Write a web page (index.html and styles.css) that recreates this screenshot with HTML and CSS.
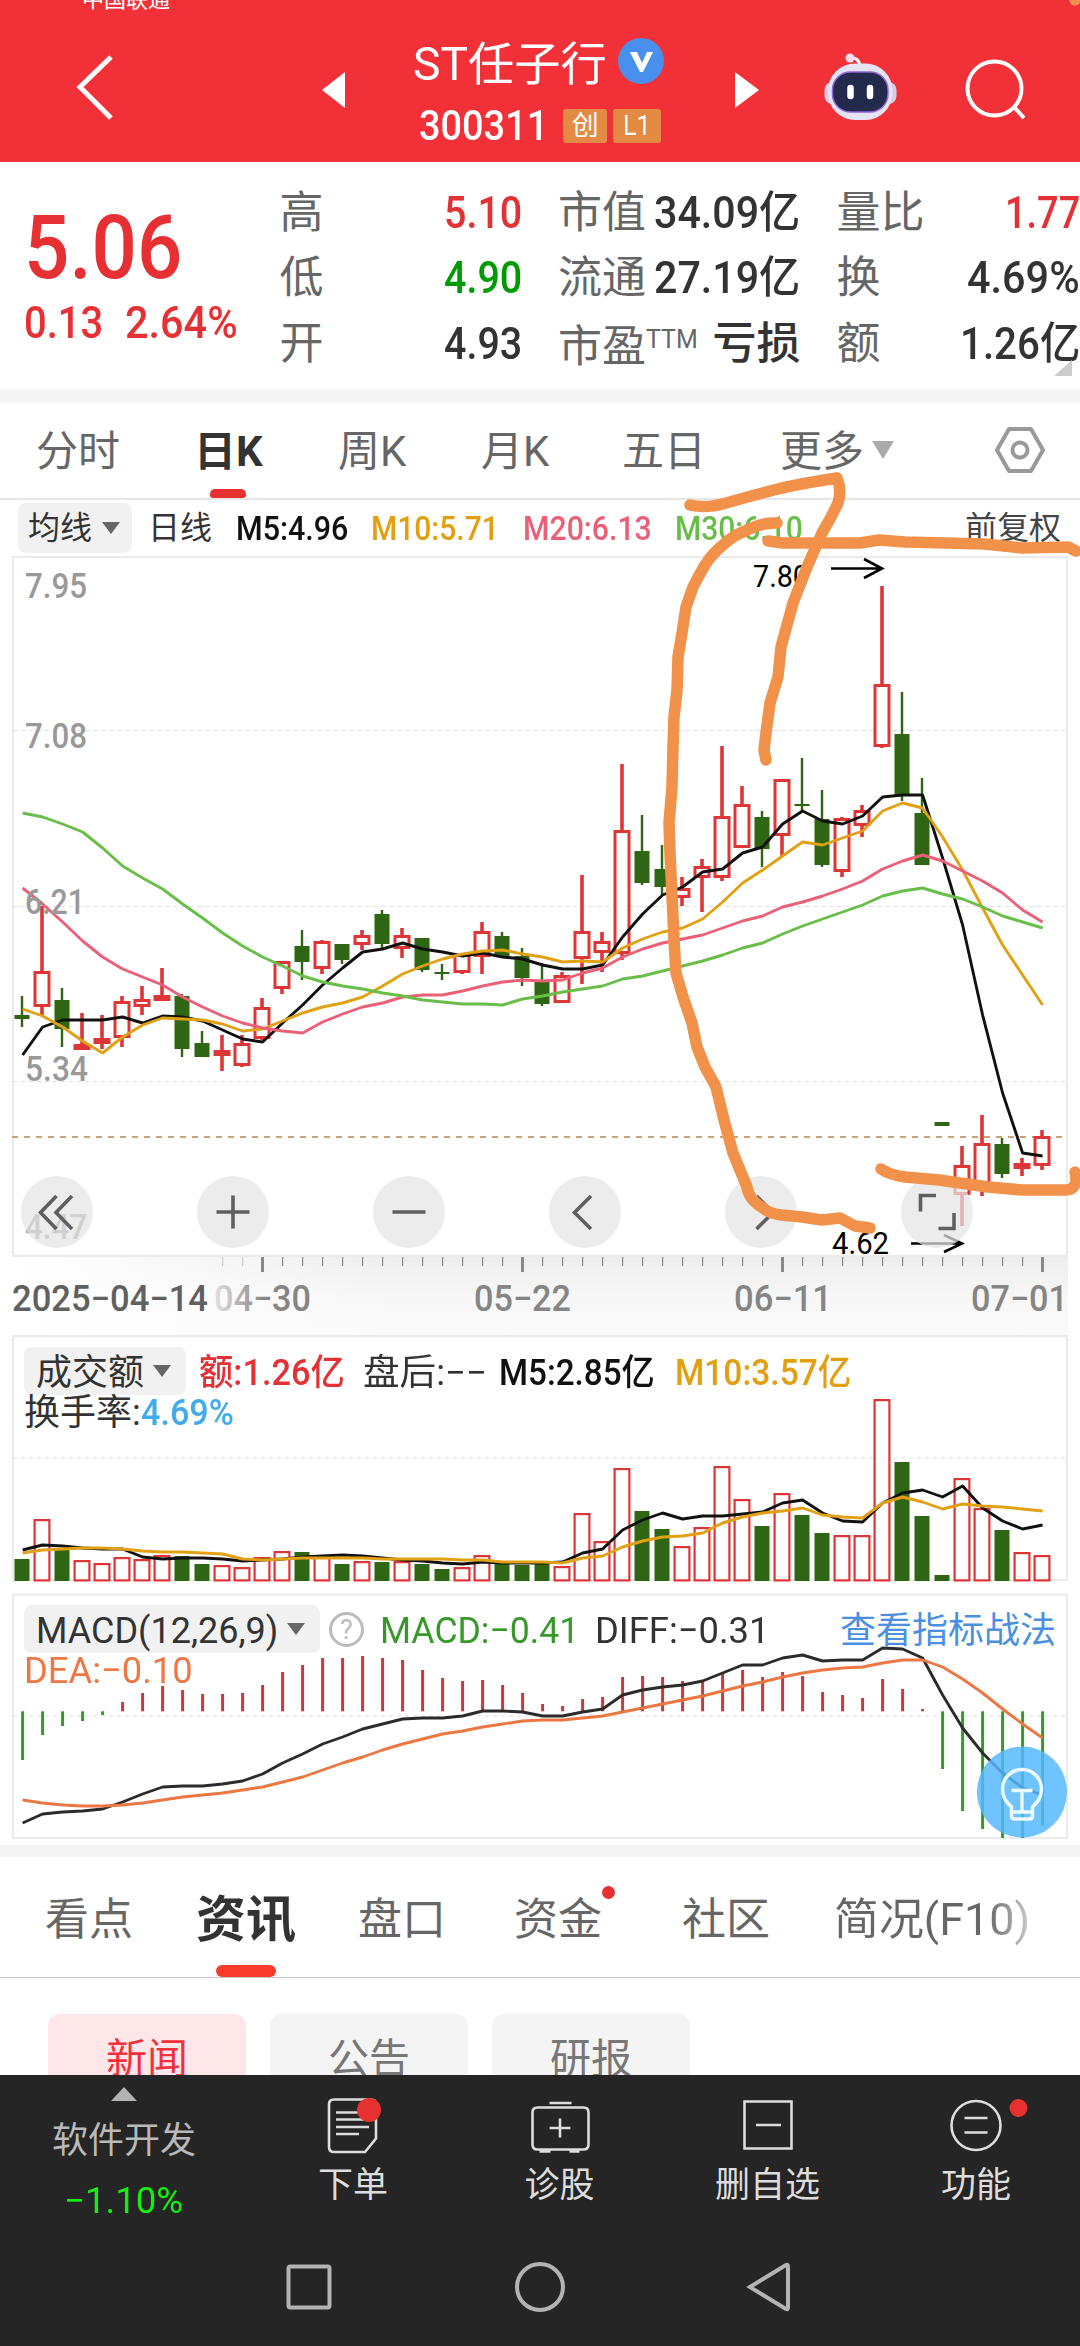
FILE: index.html
```html
<!DOCTYPE html>
<html lang="zh-CN">
<head>
<meta charset="utf-8">
<title>ST任子行 300311</title>
<link rel="stylesheet" href="styles.css">
</head>
<body>
<header class="top">
  <div class="carrier">中国联通</div>
  <div class="topbar">
    <svg class="back" width="40" height="70" viewBox="0 0 40 70"><path d="M36 5 5 35 36 66"/></svg>
    <svg class="prev" width="24" height="36" viewBox="0 0 24 36"><path d="M0 18 23 0v36z"/></svg>
    <div class="name">
      <div class="name-row"><span class="fit" data-w="194">ST任子行</span>
        <svg width="46" height="46" viewBox="0 0 46 46"><circle cx="23" cy="23" r="23" fill="#4890ec"/><path d="M12 14h7l5 11 5-11h6L25 34h-3z" fill="#fff"/></svg></div>
      <div class="code-row"><span class="fit code" data-w="129">300311</span><i class="tag">创</i><i class="tag tag-l"><span class="fit" data-w="28">L1</span></i></div>
    </div>
    <svg class="next" width="24" height="36" viewBox="0 0 24 36"><path d="M24 18 0 0v36z"/></svg>
    <svg class="robot" width="76" height="76" viewBox="823 50 76 76">
      <path d="M851 58q9-1 10 8" fill="none" stroke="#fff" stroke-width="3"/><circle cx="851" cy="58" r="4.5" fill="#f3dfee"/>
      <rect x="825.500" y="82" width="72" height="22" rx="8" fill="#d3cde8"/>
      <rect x="829" y="63.500" width="64.500" height="56.500" rx="27" fill="#e6e3f4"/>
      <rect x="833.500" y="72" width="55.500" height="40" rx="18" fill="#232a4c" stroke="#8e66dd" stroke-width="1.500"/>
      <path d="M851.500 88v8M871 88v8" stroke="#fff" stroke-width="6.500" stroke-linecap="round"/>
    </svg>
    <svg class="search" width="62" height="62" viewBox="964 58 62 62"><circle cx="994.500" cy="88.500" r="27"/><path d="m1014 107 10 11"/></svg>
  </div>
</header>

<section class="quote">
  <div class="price">
    <div class="big"><span class="fit" data-w="158">5.06</span></div>
    <div class="chg"><span class="fit" data-w="79">0.13</span><span class="fit" data-w="113">2.64%</span></div>
  </div>
  <dl class="q1">
    <div><dt>高</dt><dd class="up"><span class="fit" data-w="78">5.10</span></dd></div>
    <div><dt>低</dt><dd class="down"><span class="fit" data-w="78">4.90</span></dd></div>
    <div><dt>开</dt><dd><span class="fit" data-w="78">4.93</span></dd></div>
  </dl>
  <dl class="q2">
    <div><dt>市值</dt><dd><span class="fit" data-w="146">34.09亿</span></dd></div>
    <div><dt>流通</dt><dd><span class="fit" data-w="146">27.19亿</span></dd></div>
    <div><dt>市盈<small>TTM</small></dt><dd>亏损</dd></div>
  </dl>
  <dl class="q3">
    <div><dt>量比</dt><dd class="up"><span class="fit" data-w="75">1.77</span></dd></div>
    <div><dt>换</dt><dd><span class="fit" data-w="113">4.69%</span></dd></div>
    <div><dt>额</dt><dd><span class="fit" data-w="120">1.26亿</span></dd></div>
  </dl>
  <i class="corner"></i>
</section>

<nav class="periods">
  <span>分时</span><span class="on">日K</span><span>周K</span><span>月K</span><span>五日</span><span>更多</span>
  <i class="more"></i>
  <svg width="52" height="50" viewBox="994 425 52 50"><path d="M1009 429h22l12 21-12 21h-22l-12-21z"/><circle cx="1020" cy="450" r="7.500"/></svg>
</nav>

<section class="ma">
  <div class="pill"><span>均线</span><i></i></div>
  <span class="day">日线</span>
  <span class="fit m5" data-w="112">M5:4.96</span>
  <span class="fit m10" data-w="128">M10:5.71</span>
  <span class="fit m20" data-w="129">M20:6.13</span>
  <span class="fit m30" data-w="128">M30:6.10</span>
  <span class="adj">前复权</span>
</section>

<svg class="kline" width="1080" height="779" viewBox="0 556 1080 779">
  <defs>
    <linearGradient id="shade" x1="0" y1="0" x2="0" y2="1"><stop offset="0" stop-color="#ededed"/><stop offset=".5" stop-color="#f7f7f7"/><stop offset="1" stop-color="#fafafa"/></linearGradient>
    <linearGradient id="veil"><stop offset="0" stop-color="#fff"/><stop offset="1" stop-color="#fff" stop-opacity="0"/></linearGradient>
    <linearGradient id="fade" gradientUnits="userSpaceOnUse" x1="210" y1="0" x2="265" y2="0"><stop offset="0" stop-color="#e8e8e8"/><stop offset="1" stop-color="#858585"/></linearGradient>
  </defs>
  <rect x="13" y="1257" width="1055" height="78" fill="url(#shade)"/>
  <rect x="13" y="1257" width="400" height="78" fill="url(#veil)"/>
  <g class="frame"><path d="M13 557H1067V1256H13z"/></g>
  <g class="grid"><path d="M13 730.500H1066M13 906.500H1066M13 1081.500H1066"/></g>
  <path class="last" d="M12 1137H1066"/>
  <g id="kline"></g>
  <g class="scale">
    <text x="25" y="598" textLength="62">7.95</text><text x="25" y="748" textLength="62">7.08</text>
    <text x="25" y="914" textLength="60">6.21</text><text x="25" y="1081" textLength="63">5.34</text>
    <text x="25" y="1239" textLength="62">4.47</text>
  </g>
  <g class="callout">
    <text x="753" y="587" textLength="56">7.80</text><path d="M831 568.500H882M864 559l18 9.500-18 9.500"/>
    <text x="832" y="1254" textLength="57">4.62</text><path d="M911 1243.500H962M944 1235l18 8.500-18 8.500"/>
  </g>
  <g class="ctrl">
    <circle cx="57" cy="1212" r="36"/><circle cx="233" cy="1212" r="36"/><circle cx="409" cy="1212" r="36"/>
    <circle cx="585" cy="1212" r="36"/><circle cx="761" cy="1212" r="36"/><circle cx="937" cy="1212" r="36"/>
    <path d="M56.500 1196l-16 16.500 16 16.500M72 1196l-16 16.500 16 16.500M216.500 1212h33M233 1195.500v33M392.500 1212h33M591 1196l-16.500 16.500 16.500 16.500M756.500 1196l16.500 16.500-16.500 16.500M936 1195.500h-15.500v16M954 1213v15.500h-15.500"/>
  </g>
  <g id="ticks"></g>
  <g class="dates">
    <text class="first" x="12" y="1311" textLength="196">2025−04−14</text>
    <text x="214" y="1311" textLength="97" fill="url(#fade)">04−30</text>
    <text x="474" y="1311" textLength="97">05−22</text>
    <text x="734" y="1311" textLength="98">06−11</text>
    <text x="971" y="1311" textLength="97">07−01</text>
  </g>
</svg>

<section class="panel volume">
  <svg width="1080" height="250" viewBox="0 1335 1080 250">
    <g class="frame"><path d="M13 1336H1067V1580H13z"/></g>
    <g class="grid"><path d="M13 1458H1066"/></g>
    <g id="volume"></g>
  </svg>
  <div class="legend">
    <div class="pill"><span>成交额</span><i></i></div>
    <span class="fit up" data-w="146">额:1.26亿</span>
    <span class="fit after" data-w="124">盘后:−−</span>
    <span class="fit m5" data-w="156">M5:2.85亿</span>
    <span class="fit m10" data-w="176">M10:3.57亿</span>
  </div>
  <div class="legend line2"><span class="fit" data-w="117">换手率:</span><span class="fit rate" data-w="93">4.69%</span></div>
</section>

<section class="panel macd">
  <svg width="1080" height="252" viewBox="0 1593 1080 252">
    <g class="frame"><path d="M13 1594.500H1067V1838H13z"/></g>
    <g class="grid"><path d="M13 1716H1066"/></g>
    <g id="macd"></g>
  </svg>
  <div class="legend">
    <div class="pill"><span class="fit" data-w="242">MACD(12,26,9)</span><i></i></div>
    <b class="help">?</b>
    <span class="fit g" data-w="199">MACD:−0.41</span>
    <span class="fit diff" data-w="175">DIFF:−0.31</span>
    <span class="link">查看指标战法</span>
  </div>
  <div class="legend line2"><span class="fit dea" data-w="169">DEA:−0.10</span></div>
  <svg class="bulb" width="90" height="94" viewBox="976.500 1745 90 94"><ellipse cx="1021.500" cy="1792" rx="45" ry="45.500"/><path d="M1011 1816v-9c-5-5-9-9-9-18a19.500 19.500 0 0 1 39 0c0 9-4 13-9 18v9q0 3-3 3h-15q-3 0-3-3zM1011 1812h21M1011 1790.500h21M1021.500 1791v20"/></svg>
</section>

<nav class="info">
  <span>看点</span><span class="on">资讯</span><span>盘口</span><span class="dot">资金</span><span>社区</span><span class="f10"><span class="fit" data-w="196">简况(F10)</span></span>
</nav>

<section class="chips"><span class="on">新闻</span><span>公告</span><span>研报</span></section>

<footer>
  <div class="actions">
    <div class="index"><i></i><span>软件开发</span><b class="fit" data-w="119">−1.10%</b></div>
    <div class="a1"><svg width="64" height="64" viewBox="321 2093 64 64"><path d="M334 2099.500h37q5 0 5 5v34l-11 13.500h-31q-5 0-5-5v-42.500q0-5 5-5zM336 2112.500h25M336 2119.500h30M336 2127h33M336 2134h23"/><circle class="red" cx="369" cy="2110" r="12"/></svg><span>下单</span></div>
    <div class="a2"><svg width="64" height="64" viewBox="527.500 2093 64 64"><path d="M537 2107.500h46q5 0 5 5v32q0 5-5 5h-46q-5 0-5-5v-32q0-5 5-5zM549 2103h22M559.500 2118.500v19M549 2128h21M539 2151.500h11M569 2151.500h10"/></svg><span>诊股</span></div>
    <div class="a3"><svg width="64" height="64" viewBox="735 2093 64 64"><path d="M743.500 2101.500h47v47h-47zM755 2125h25"/></svg><span>删自选</span></div>
    <div class="a4"><svg width="80" height="64" viewBox="935.500 2093 80 64" overflow="visible"><circle cx="975.500" cy="2125.500" r="24.500"/><path d="M964 2118h23M964 2132.500h23"/><circle class="red" cx="1018" cy="2108" r="9"/></svg><span>功能</span></div>
  </div>
  <svg class="sys" width="1080" height="60" viewBox="0 2257 1080 60"><rect x="288.500" y="2266.500" width="41" height="41" rx="2"/><circle cx="540" cy="2287" r="23"/><path d="M750 2287l36-22q2-1 2 2v40q0 3-2 2z"/></svg>
</footer>

<svg class="marks" width="1080" height="1300" viewBox="0 0 1080 1300">
  <path d="M690 505Q706 509 726 503 758 494 778 489T837 478Q842 490 838 503 831 518 822 533L807 567 793 603 781 647 778 677 770 703 766 733 764 750 766 760"/>
  <path d="M777 523Q762 522 743 532 734 535 723 545 712 554 705 565 698 577 693 587L686 607 682 633 678 657 677 690 674 717 673 747 672 787 669 823 670 853 673 917 674 940 676 973 683 997 692 1023 697 1047 705 1067 716 1087 724 1120 733 1153 747 1187Q749 1200 763 1208 768 1213 781 1215L802 1217 822 1220 840 1218 855 1226 870 1228"/>
  <path d="M768 541 783 543H860L879 540 905 542 946 543 984 544 1022 548 1068 547 1076 551"/>
  <path d="M881 1169Q890 1175 905 1177L939 1180 988 1187 1022 1190 1065 1190Q1079 1190 1075 1172"/>
  <path d="M1075-6v6"/>
</svg>
<script src="app.js"></script>
</body>
</html>
```
FILE: styles.css
```css
* { box-sizing: border-box; }
body { margin: 0; width: 1080px; height: 2346px; overflow: hidden; position: relative; background: #fff; color: #333; font-family: Roboto, "Noto Sans CJK SC", sans-serif; }
i { font-style: normal; }
dl, dd { margin: 0; }
.fit { display: inline-block; white-space: nowrap; transform-origin: 0 50%; flex: none; }
svg { flex: none; }
.up { color: #e23236; }
.down { color: #009b00; }
.m5 { color: #111; }
.m10 { color: #e29f12; }
.m20 { color: #eb6077; }
.m30 { color: #68be48; }

.top { height: 162px; background: #f23037; color: #fff; overflow: hidden; }
.carrier { height: 20px; padding-left: 82px; margin-bottom: 0; font-size: 22px; line-height: 22px; margin-top: -11px; }
.topbar { display: flex; align-items: flex-start; height: 153px; }
.back { fill: none; stroke: #fff; stroke-width: 5; }
.topbar > .back { margin-top: 43px; margin-left: 75px; }
.topbar > .prev { margin-top: 63px; margin-left: 207px; }
.topbar > .next { margin-top: 63px; margin-left: 70px; }
.prev, .next { fill: #fff; }
.name { width: 252px; margin-left: 67px; padding-top: 24px; }
.name-row { display: flex; align-items: center; justify-content: space-between; font-size: 46px; line-height: 56px; height: 56px; padding-right: 1px; }
.name-row .fit { padding-top: 5px; }
.code-row { display: flex; align-items: center; margin-top: 17px; padding-left: 6px; height: 40px; font-size: 42px; font-weight: 500; line-height: 42px; }
.tag { height: 34px; width: 44px; margin-left: 15px; background: #e38b45; border-radius: 3px; font: 400 27px/34px Roboto, "Noto Sans CJK SC", sans-serif; text-align: center; }
.tag-l { width: 48px; margin-left: 6px; text-align: left; padding-left: 10px; }
.topbar > .robot { margin-top: 41px; margin-left: 63px; }
.topbar > .search { margin-top: 49px; margin-left: 66px; fill: none; stroke: #fff; stroke-width: 4; }

.quote { height: 240px; border-bottom: 12px solid #f4f4f4; position: relative; display: flex; }
.price { width: 281px; padding-left: 24px; color: #e73033; }
.big { font-size: 89px; font-weight: 500; line-height: 90px; margin-top: 41px; }
.chg { display: flex; gap: 22px; font-size: 44px; line-height: 50px; margin-top: 5px; font-weight: 500; }
.quote dl { padding-top: 18px; }
.quote dl div { display: flex; justify-content: space-between; align-items: center; height: 65.5px; }
.quote dt { font-size: 44px; line-height: 60px; color: #666; }
.quote dt small { font-size: 25px; vertical-align: 14px; font-weight: 400; }
.quote dd { font-size: 44px; line-height: 60px; font-weight: 500; white-space: nowrap; }
.q1 { width: 242px; }
.q1 dt { margin-left: -1px; }
.q2 { width: 243px; margin-left: 36px; }
.q3 { width: 244px; margin-left: 36px; }
.corner { position: absolute; right: 8px; top: 198px; border-left: 18px solid transparent; border-bottom: 16px solid #ccc; }

.periods { height: 98px; border-bottom: 2px solid #e6e6e6; position: relative; display: grid; grid-template-columns: 158px 144px 143px 141px 158px 92px 124px 60px; padding-left: 36px; font-size: 42px; line-height: 100px; color: #666; }
.periods span { white-space: nowrap; height: 96px; }
.periods .on { color: #333; font-weight: 700; position: relative; }
.periods .on::after { content: ""; position: absolute; left: 16px; bottom: 0; width: 36px; height: 9px; border-radius: 5px 5px 3px 3px; background: #e73030; }
.more { width: 0; height: 0; margin-top: 39px; border: 11px solid transparent; border-top: 18px solid #aaa; border-bottom: 0; }
.periods svg { margin-top: 23px; margin-left: -2px; fill: none; stroke: #999; stroke-width: 4; stroke-linejoin: round; }

.ma { height: 56px; display: flex; align-items: center; padding: 0 19px 0 18px; font-size: 34px; font-weight: 500; line-height: 51px; }
.pill { background: #f1f1f1; border-radius: 8px; display: flex; align-items: center; }
.pill i { border: 9px solid transparent; border-top: 12px solid #666; border-bottom: 0; }
.ma .pill { width: 114px; height: 50px; padding-left: 10px; gap: 10px; font-size: 32px; font-weight: 400; }
.day { font-size: 32px; font-weight: 400; margin-left: 16px; width: 88px; }
.ma .m10 { margin-left: 23px; }
.ma .m20 { margin-left: 24px; }
.ma .m30 { margin-left: 23px; }
.adj { margin-left: auto; font-size: 32px; font-weight: 400; color: #444; }

.kline { display: block; }
.frame { fill: none; stroke: #ebebeb; stroke-width: 2; }
.grid { fill: none; stroke: #dedede; stroke-width: 1.2; stroke-dasharray: 4 4; }
.last { stroke: #c8a373; stroke-width: 2; stroke-dasharray: 6 6; }
.line { fill: none; stroke-width: 2.9; stroke-linejoin: round; }
.scale { font-size: 35px; font-weight: 500; fill: #999; }
.callout { font-size: 31px; fill: #000; }
.callout path { fill: none; stroke: #000; stroke-width: 2.6; }
.ctrl { fill: rgba(228, 228, 228, .72); }
.ctrl path { fill: none; stroke: #5f5f5f; stroke-width: 3.6; }
.dates { font-size: 36px; fill: #858585; font-weight: 500; }
.dates .first { fill: #606060; }

.panel { position: relative; }
.panel > svg:first-child { position: absolute; left: 0; top: 0; }
.volume { height: 258px; padding-top: 12px; }
.macd { height: 252px; padding-top: 12px; }
.legend { position: relative; display: flex; align-items: center; height: 48px; margin-left: 24px; font-size: 36px; line-height: 48px; }
.legend span { padding-top: 3px; }
.legend .pill { width: 162px; height: 48px; padding-left: 12px; gap: 9px; margin-right: 13px; font-size: 36px; }
.volume .legend .fit { font-weight: 500; }
.volume .legend .after { font-weight: 400; margin-left: 18px; color: #333; }
.volume .m5 { margin-left: 12px; }
.volume .m10 { margin-left: 20px; }
.volume .line2, .macd .line2 { height: 36px; line-height: 36px; margin-top: -2px; }
.volume .line2 .fit:first-child { font-weight: 400; }
.rate { color: #42acea; }
.macd .legend .pill { width: 296px; }
.macd .legend { font-size: 37px; }
.help { width: 35px; height: 35px; border: 3px solid #bbb; border-radius: 50%; margin-left: -4px; margin-right: 16px; font-size: 27px; line-height: 30px; text-align: center; font-weight: 400; color: #bbb; }
.g { color: #38992a; }
.diff { margin-left: 16px; }
.link { font-size: 36px; color: #4a90e2; margin-left: auto; margin-right: 24px; }
.dea { color: #ee7744; }
.bulb { position: absolute; left: 976.5px; top: 152px; }
.bulb ellipse { fill: rgba(84, 184, 255, .84); }
.bulb path { fill: none; stroke: #eafaff; stroke-width: 3.5; stroke-linejoin: round; }

.info { height: 133px; border-top: 12px solid #f4f4f4; border-bottom: 1px solid #c8c8c8; display: grid; grid-template-columns: 151px 162px 156px 168px 152px 200px; padding-left: 45px; font-size: 44px; line-height: 126px; color: #666; }
.info span { white-space: nowrap; height: 120px; }
.info .on { font-size: 50px; font-weight: 700; color: #333; position: relative; }
.info .on::after { content: ""; position: absolute; left: 20px; bottom: 0; width: 60px; height: 12px; border-radius: 7px; background: #f93b2e; }
.dot { position: relative; }
.dot::after { content: ""; position: absolute; left: 88px; top: 29px; width: 13px; height: 13px; border-radius: 50%; background: #e73030; }
.f10 .fit { background: linear-gradient(90deg, #666 78%, #ccc); -webkit-background-clip: text; background-clip: text; color: transparent; }

.chips { height: 97px; padding: 36px 48px 0; display: flex; gap: 24px; overflow: hidden; }
.chips span { width: 198px; height: 90px; border-radius: 12px; background: #f4f4f4; color: #777; font-size: 41px; line-height: 90px; text-align: center; }
.chips .on { background: #ffe7e9; color: #f0303d; }

footer { height: 271px; background: #252525; color: #ddd; }
.actions { height: 182px; display: flex; }
.actions > div { display: flex; flex-direction: column; align-items: center; font-size: 35px; line-height: 40px; padding-top: 18px; }
.actions > div > span { margin-top: 9px; }
.actions svg { fill: none; stroke: #ddd; stroke-width: 2.6; }
.actions .red { fill: #e73030; stroke: none; }
.actions .index { width: 248px; padding-top: 12px; color: #b9b9b9; }
.actions .index i { border: 13px solid transparent; border-bottom: 14px solid #b3b3b3; border-top: 0; }
.actions .index span { font-size: 36px; margin-top: 20px; }
.index b { margin-top: 20px; font-size: 36px; font-weight: 400; color: #12f012; }
.a1 { width: 210px; }
.a2 { width: 203px; }
.a3 { width: 213px; }
.a4 { width: 204px; }
.sys { display: block; fill: none; stroke: #b3b3b3; stroke-width: 4; }
.marks { position: absolute; left: 0; top: 0; fill: none; stroke: #f29149; stroke-width: 11.5; stroke-linecap: round; stroke-linejoin: round; }
```
FILE: app.js
```js
document.querySelectorAll('.fit').forEach(function (el) {
  var w = +el.dataset.w, n = el.offsetWidth;
  el.style.transform = 'scaleX(' + w / n + ')';
  el.style.marginRight = (w - n) + 'px';
});
document.querySelectorAll('text[textLength]').forEach(function (t) {
  t.setAttribute('lengthAdjust', 'spacingAndGlyphs');
});

var RED = '#dd3639', GREEN = '#2f6614';
function X(i) { return 22 + 20 * i; }
function rect(x, y, w, h, fill) { return '<rect x="' + x + '" y="' + y + '" width="' + w + '" height="' + h + '" fill="' + fill + '"/>'; }
function hollow(x, top, bottom, s) {
  return '<rect x="' + (x - 8.5 + s / 2) + '" y="' + (top + s / 2) + '" width="' + (17 - s) + '" height="' + Math.max(1, bottom - top - s) + '" fill="#fff" stroke="' + RED + '" stroke-width="' + s + '"/>';
}
function line(ys, color) {
  return '<polyline class="line" stroke="' + color + '" points="' + ys.map(function (y, i) { return (X(i) + 0.6) + ',' + y; }).join(' ') + '"/>';
}

// colour, high, body top, body bottom, low
var candles = [
 'g',996,1015,1019,1027,'r',906,971,1007,1015,'g',988,1000,1029,1047,'r',1013,1044,1050,1050,'r',1015,1038,1044,1049,
 'r',996,1001,1038,1047,'r',986,999,1007,1015,'r',968,995,1001,1001,'g',994,996,1049,1057,'g',1031,1043,1057,1057,
 'r',1035,1050,1056,1071,'r',1035,1043,1066,1067,'r',998,1007,1039,1040,'r',961,961,989,994,'g',930,946,962,980,
 'r',940,941,969,974,'g',944,944,960,964,'r',930,935,945,950,'g',910,914,944,948,'r',928,935,949,958,
 'g',938,938,970,972,'g',964,972,974,980,'r',953,954,973,974,'r',922,931,957,974,'g',932,936,957,957,
 'g',948,956,978,986,'g',963,982,1004,1006,'r',972,975,1003,1003,'r',875,931,959,984,'r',932,941,953,972,
 'r',764,830,954,960,'g',815,851,883,885,'g',845,869,887,895,'r',877,888,898,906,'r',859,866,878,912,
 'r',746,816,878,881,'r',786,804,848,848,'g',811,817,849,867,'r',779,779,836,857,'g',758,804,806,811,
 'g',790,819,865,867,'r',817,818,872,877,'r',805,810,826,837,'r',586,684,747,748,'g',692,734,795,801,
 'g',778,813,865,865,'g',1122,1122,1126,1126,'r',1146,1165,1195,1226,'r',1115,1143,1185,1196,'g',1138,1144,1174,1178,
 'r',1158,1163,1169,1176,'r',1130,1136,1166,1170];
var ma5 = [1055,1027,1020,1020,1020,1017,1023,1016,1017,1021,1030,1039,1042,1023,1005,985,968,952,949,943,949,952,956,953,957,959,965,969,969,965,937,914,895,887,872,869,853,847,824,811,821,824,816,797,795,795,858,925,1015,1093,1153,1156];
var ma10 = [1009,1016,1027,1041,1053,1037,1025,1018,1019,1020,1024,1031,1029,1021,1013,1007,1003,997,986,974,966,959,954,951,950,954,957,962,961,962,948,939,932,928,919,902,883,870,856,842,845,838,831,811,803,808,837,870,908,945,975,1005];
var ma20 = [888,904,922,941,957,969,977,985,997,1007,1016,1023,1028,1031,1033,1022,1014,1007,1003,997,995,995,991,986,982,980,981,980,973,968,957,949,943,939,935,928,921,916,907,902,896,889,881,869,861,855,861,871,881,893,910,922];
var ma30 = [813,817,824,832,848,866,878,889,904,918,933,946,957,966,976,982,986,989,993,996,1000,1002,1004,1004,1005,999,996,992,989,986,979,976,971,966,961,955,948,943,934,926,919,912,905,896,891,888,894,899,907,916,922,928];

var out = '', i;
for (i = 0; i < 52; i++) {
  var c = candles.slice(i * 5, i * 5 + 5), x = X(i), red = c[0] === 'r';
  out += rect(x - (red ? 1.8 : 1.2), c[1], red ? 3.6 : 2.4, c[4] - c[1], red ? RED : GREEN);
  out += red ? hollow(x, c[2], c[3], 3) : rect(x - 7.5, c[2], 15, c[3] - c[2], GREEN);
}
out += line(ma5, '#111') + line(ma10, '#e2a014') + line(ma20, '#eb6077') + line(ma30, '#68be48');
document.getElementById('kline').innerHTML = out;

out = '';
for (i = 10; i < 52; i++) {
  var major = i === 12 || i === 25 || i === 38 || i === 51;
  out += rect(X(i) + (major ? -1 : 0), 1257, major ? 3 : 1.2, major ? 15 : 9, i < 12 ? '#ccc' : '#888');
}
document.getElementById('ticks').innerHTML = out;

var vol = [1559,1519,1548,1560,1563,1557,1559,1555,1556,1564,1565,1567,1557,1551,1552,1555,1564,1561,1562,1561,1564,1569,1567,1555,1564,1565,1563,1566,1513,1541,1468,1511,1529,1546,1527,1466,1499,1526,1493,1515,1533,1535,1535,1399,1462,1516,1575,1478,1508,1530,1552,1555];
var v5 = [1550,1545,1546,1548,1549,1549,1557,1559,1558,1558,1559,1561,1560,1559,1557,1556,1555,1556,1558,1560,1561,1563,1564,1562,1563,1563,1563,1562,1553,1549,1530,1520,1513,1519,1516,1516,1514,1512,1503,1500,1513,1521,1522,1503,1493,1490,1497,1486,1508,1521,1529,1525];
var v10 = [1553,1550,1549,1548,1548,1549,1551,1552,1552,1553,1554,1559,1560,1559,1558,1558,1558,1558,1559,1559,1559,1559,1560,1560,1562,1562,1562,1563,1558,1556,1547,1541,1537,1536,1533,1523,1517,1513,1511,1508,1515,1517,1518,1503,1497,1502,1509,1504,1506,1507,1509,1511];
out = '';
for (i = 0; i < 52; i++) {
  out += candles[i * 5] === 'r' ? hollow(X(i), vol[i], 1581.5, 2.2) : rect(X(i) - 7.5, vol[i], 15, 1581 - vol[i], GREEN);
}
out += line(v5, '#111') + line(v10, '#e2a014');
document.getElementById('volume').innerHTML = out;

var bars = [1760,1735,1726,1721,1715,1702,1693,1686,1690,1694,1694,1693,1685,1672,1665,1658,1658,1656,1658,1660,1670,1678,1681,1680,1685,1693,1704,1706,1699,1697,1677,1676,1677,1681,1682,1673,1670,1677,1672,1676,1692,1695,1698,1679,1689,1709,1769,1811,1829,1838,1838,1826];
var diff = [1823,1814,1812,1811,1809,1802,1794,1787,1786,1786,1784,1781,1774,1763,1754,1744,1737,1729,1724,1719,1718,1718,1716,1711,1711,1712,1716,1716,1712,1709,1695,1690,1687,1685,1681,1673,1665,1665,1658,1655,1661,1660,1660,1648,1649,1658,1695,1728,1753,1773,1788,1795];
var dea = [1800,1803,1805,1806,1806,1805,1803,1800,1797,1795,1793,1790,1787,1782,1777,1770,1763,1757,1750,1744,1739,1734,1731,1727,1724,1721,1720,1720,1718,1716,1712,1708,1704,1700,1696,1691,1686,1682,1677,1673,1670,1668,1667,1663,1660,1660,1667,1679,1693,1709,1724,1738];
out = '';
for (i = 0; i < 52; i++) {
  var up = bars[i] < 1711.3;
  out += rect(X(i) - 0.9, up ? bars[i] : 1711.3, 3, Math.abs(bars[i] - 1711.3), up ? '#cb3a3a' : '#38992a');
}
out += line(diff, '#2b2b2b') + line(dea, '#ec7743');
document.getElementById('macd').innerHTML = out;
```
